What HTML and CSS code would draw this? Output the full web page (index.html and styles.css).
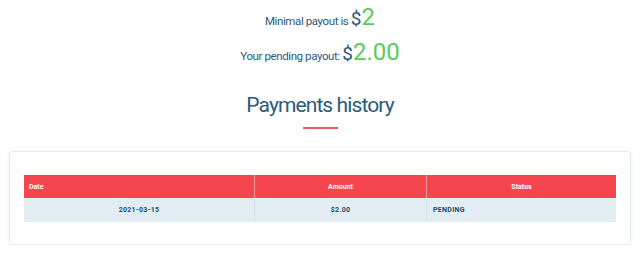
FILE: index.html
```html
<!DOCTYPE html>
<html lang="en">
<head>
    <meta charset="UTF-8">
    <meta name="viewport" content="width=device-width, initial-scale=1.0">
    <title>Payments</title>
    <link rel="stylesheet" href="styles.css">
</head>
<body>
    <div class="payout">
        <p class="payout-line">Minimal payout is <span class="currency">$</span><span class="sum">2</span></p>
        <p class="payout-line">Your pending payout: <span class="currency">$</span><span class="sum">2.00</span></p>
    </div>

    <h2 class="section-title">Payments history</h2>

    <div class="card">
        <table class="history">
            <thead>
                <tr>
                    <th class="col-date">Date</th>
                    <th class="col-amount">Amount</th>
                    <th class="col-status">Status</th>
                </tr>
            </thead>
            <tbody>
                <tr>
                    <td class="center">2021-03-15</td>
                    <td class="center">$2.00</td>
                    <td>PENDING</td>
                </tr>
            </tbody>
        </table>
    </div>
</body>
</html>
```

FILE: styles.css
```css
/* base */
body {
    margin: 0;
    background: #fff;
    font-family: "Roboto", "Liberation Sans", sans-serif;
    color: #2b5a7c;
}

/* payout info */
.payout {
    text-align: center;
    padding-top: 2px;
}

.payout-line {
    margin: 0 0 4px;
    height: 31px;
    line-height: 31px;
    font-size: 11.5px;
    letter-spacing: -0.4px;
}

.currency {
    font-size: 19px;
    color: #2b5a7c;
    letter-spacing: 0;
}

.sum {
    font-size: 24px;
    color: #5cc95c;
    letter-spacing: 0;
}

/* section title */
.section-title {
    margin: 23px 0 0;
    text-align: center;
    font-size: 21px;
    font-weight: normal;
    letter-spacing: -0.9px;
    line-height: 28px;
}

.section-title::after {
    content: "";
    display: block;
    width: 35px;
    height: 2px;
    margin: 8px auto 0;
    background: #e8585c;
}

/* table card */
.card {
    margin: 22px 9px 0;
    padding: 23px 14px 22px;
    border: 1px solid #e3ebef;
    border-radius: 3px;
    box-shadow: 0 1px 4px rgba(40, 80, 110, 0.08);
}

.history {
    width: 100%;
    border-collapse: collapse;
    font-size: 7px;
    font-weight: bold;
}

.history th {
    height: 23px;
    padding: 0 5px;
    background: #f5464f;
    color: #fff;
    text-align: center;
    border-left: 1px solid #f59a9e;
}

.history th:first-child {
    border-left: none;
}

.history .col-date {
    width: 220px;
    text-align: left;
}

.history .col-amount {
    width: 161px;
}

.history td {
    height: 24px;
    padding: 0 6px;
    background: #e1ecf3;
    color: #1e4d6c;
    letter-spacing: 0.3px;
    border-left: 1px solid #d5e2ea;
}

.history td:first-child {
    border-left: none;
}

.history .center {
    text-align: center;
}
```
